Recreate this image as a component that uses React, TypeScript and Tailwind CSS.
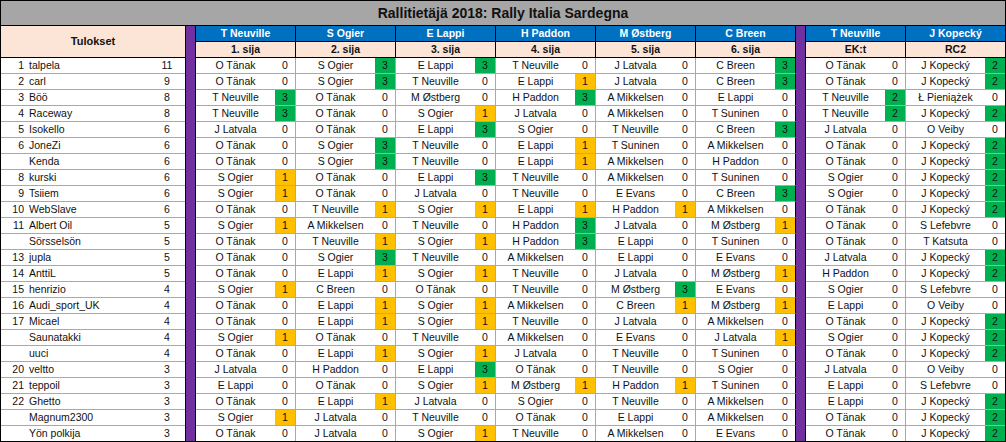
const NAMES: Record<string, string> = {
  OT: 'O Tänak',
  SO: 'S Ogier',
  EL: 'E Lappi',
  TN: 'T Neuville',
  JL: 'J Latvala',
  CB: 'C Breen',
  HP: 'H Paddon',
  MO: 'M Østberg',
  AM: 'A Mikkelsen',
  TS: 'T Suninen',
  EE: 'E Evans',
  JK: 'J Kopecký',
  LP: 'Ł Pieniążek',
  OV: 'O Veiby',
  SL: 'S Lefebvre',
  TK: 'T Katsuta',
}

const HEAD1 = [
  { driver: 'T Neuville', label: '1. sija' },
  { driver: 'S Ogier', label: '2. sija' },
  { driver: 'E Lappi', label: '3. sija' },
  { driver: 'H Paddon', label: '4. sija' },
  { driver: 'M Østberg', label: '5. sija' },
  { driver: 'C Breen', label: '6. sija' },
]

const HEAD2 = [
  { driver: 'T Neuville', label: 'EK:t' },
  { driver: 'J Kopecký', label: 'RC2' },
]

// rank, nimi, pisteet, veikkaukset (koodi + pisteet)
const ROWS: [string, string, number, string][] = [
  ['1', 'talpela', 11, 'OT0 SO3 EL3 TN0 JL0 CB3 OT0 JK2'],
  ['2', 'carl', 9, 'OT0 SO3 TN0 EL1 JL0 CB3 OT0 JK2'],
  ['3', 'Böö', 8, 'TN3 OT0 MO0 HP3 AM0 EL0 TN2 LP0'],
  ['4', 'Raceway', 8, 'TN3 OT0 SO1 JL0 AM0 TS0 TN2 JK2'],
  ['5', 'Isokello', 6, 'JL0 OT0 EL3 SO0 TN0 CB3 JL0 OV0'],
  ['6', 'JoneZi', 6, 'OT0 SO3 TN0 EL1 TS0 AM0 OT0 JK2'],
  ['', 'Kenda', 6, 'OT0 SO3 TN0 EL1 AM0 HP0 OT0 JK2'],
  ['8', 'kurski', 6, 'SO1 OT0 EL3 TN0 AM0 TS0 SO0 JK2'],
  ['9', 'Tsiiem', 6, 'SO1 OT0 JL0 TN0 EE0 CB3 SO0 JK2'],
  ['10', 'WebSlave', 6, 'OT0 TN1 SO1 EL1 HP1 AM0 OT0 JK2'],
  ['11', 'Albert Oil', 5, 'SO1 AM0 TN0 HP3 JL0 MO1 OT0 SL0'],
  ['', 'Sörsselsön', 5, 'OT0 TN1 SO1 HP3 EL0 TS0 OT0 TK0'],
  ['13', 'jupla', 5, 'OT0 SO3 TN0 AM0 EL0 EE0 JL0 JK2'],
  ['14', 'AnttiL', 5, 'OT0 EL1 SO1 TN0 JL0 MO1 HP0 JK2'],
  ['15', 'henrizio', 4, 'SO1 CB0 OT0 TN0 MO3 EE0 SO0 SL0'],
  ['16', 'Audi_sport_UK', 4, 'OT0 EL1 SO1 AM0 CB1 MO1 EL0 OV0'],
  ['17', 'Micael', 4, 'OT0 EL1 SO1 TN0 JL0 AM0 OT0 JK2'],
  ['', 'Saunatakki', 4, 'SO1 OT0 TN0 AM0 EE0 JL1 SO0 JK2'],
  ['', 'uuci', 4, 'OT0 EL1 SO1 JL0 TN0 TS0 OT0 JK2'],
  ['20', 'veltto', 3, 'JL0 HP0 EL3 OT0 TN0 SO0 JL0 OV0'],
  ['21', 'teppoil', 3, 'EL0 OT0 SO1 MO1 HP1 TS0 EL0 SL0'],
  ['22', 'Ghetto', 3, 'OT0 EL1 JL0 SO0 TN0 AM0 EL0 JK2'],
  ['', 'Magnum2300', 3, 'SO1 JL0 TN0 OT0 EL0 AM0 OT0 JK2'],
  ['', 'Yön polkija', 3, 'OT0 JL0 SO1 TN0 AM0 EE0 OT0 JK2'],
]

function scoreBg(score: number) {
  if (score >= 2) return 'bg-[#00b050]'
  if (score === 1) return 'bg-[#ffc000]'
  return 'bg-white'
}

function PickCell({ code, last, edge }: { code: string; last: boolean; edge: 'gray' | 'black' | 'none' }) {
  const score = Number(code[2])
  const border =
    edge === 'black' ? 'border-r border-black' : edge === 'gray' ? 'border-r border-[#a9a9a9]' : ''
  return (
    <div
      className={`flex ${edge === 'none' ? 'w-[99px]' : 'w-[100px]'} ${border} ${
        last ? 'h-[15px]' : 'h-[16px] border-b border-b-[#a9a9a9]'
      }`}
    >
      <div className="flex w-[79px] items-center justify-center bg-white">{NAMES[code.slice(0, 2)]}</div>
      <div className={`flex w-[20px] items-center justify-center ${scoreBg(score)}`}>{score}</div>
    </div>
  )
}

function HeadCell({ driver, label, edge }: { driver: string; label: string; edge: 'black' | 'none' }) {
  return (
    <div
      className={`flex flex-col font-bold text-[10.5px] ${
        edge === 'none' ? 'w-[99px]' : 'w-[100px] border-r border-black'
      }`}
    >
      <div className="flex h-[16px] items-center justify-center border-b border-black bg-[#0070c0] text-white">
        {driver}
      </div>
      <div className="flex h-[16px] items-center justify-center border-b border-black bg-[#fce4d6] text-[#111]">
        {label}
      </div>
    </div>
  )
}

export default function App() {
  return (
    <div className="h-[442px] w-[1006px] overflow-hidden border border-black bg-white font-['Liberation_Sans',Arial,sans-serif] text-[10.5px] leading-none text-[#111]">
      {/* otsikko */}
      <div className="flex h-[25px] items-center justify-center border-b border-black bg-[#a6a6a6] text-[14px] font-bold">
        Rallitietäjä 2018: Rally Italia Sardegna
      </div>

      <div className="flex">
        {/* tulokset */}
        <div className="flex w-[185px] flex-col border-r border-black">
          <div className="flex h-[32px] items-center justify-center border-b border-black bg-[#fce4d6] text-[11px] font-bold">
            Tulokset
          </div>
          {ROWS.map(([rank, name, total], i) => (
            <div
              key={name}
              className={`flex ${i === ROWS.length - 1 ? 'h-[15px]' : 'h-[16px] border-b border-[#a9a9a9]'}`}
            >
              <div className="flex w-[23px] items-center justify-end">{rank}</div>
              <div className="flex flex-1 items-center pl-[5px]">{name}</div>
              <div className="flex w-[36px] items-center justify-center">{total}</div>
            </div>
          ))}
        </div>

        <div className="w-[10px] border-r border-black bg-[#7030a0]" />

        {/* sijat 1-6 */}
        <div className="flex flex-col">
          <div className="flex">
            {HEAD1.map((h) => (
              <HeadCell key={h.label} driver={h.driver} label={h.label} edge="black" />
            ))}
          </div>
          {ROWS.map(([, name, , picks], i) => (
            <div key={name} className="flex">
              {picks
                .split(' ')
                .slice(0, 6)
                .map((code, j) => (
                  <PickCell key={j} code={code} last={i === ROWS.length - 1} edge={j === 5 ? 'black' : 'gray'} />
                ))}
            </div>
          ))}
        </div>

        <div className="w-[10px] border-r border-black bg-[#7030a0]" />

        {/* EK ja RC2 */}
        <div className="flex flex-col">
          <div className="flex">
            {HEAD2.map((h, j) => (
              <HeadCell key={h.label} driver={h.driver} label={h.label} edge={j === 1 ? 'none' : 'black'} />
            ))}
          </div>
          {ROWS.map(([, name, , picks], i) => (
            <div key={name} className="flex">
              {picks
                .split(' ')
                .slice(6)
                .map((code, j) => (
                  <PickCell key={j} code={code} last={i === ROWS.length - 1} edge={j === 1 ? 'none' : 'gray'} />
                ))}
            </div>
          ))}
        </div>
      </div>
    </div>
  )
}
